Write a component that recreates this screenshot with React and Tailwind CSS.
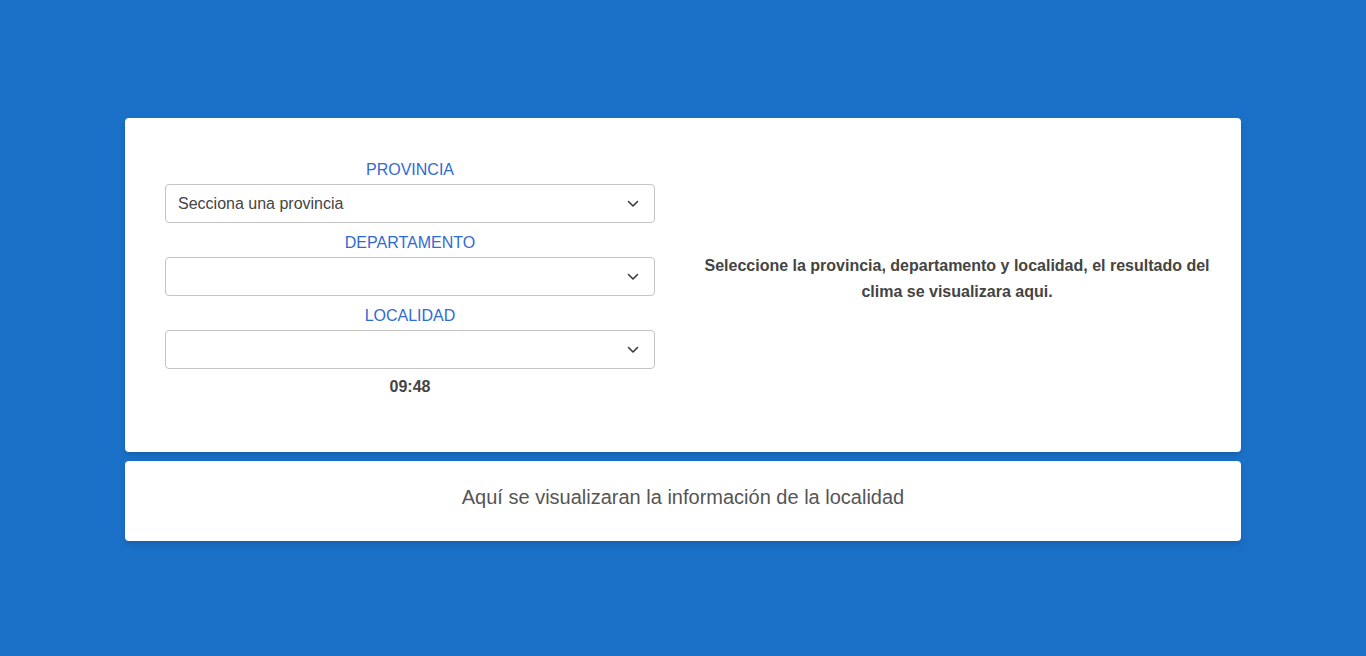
import React, { useState } from "react";

const Chevron = () => (
  <svg
    className="pointer-events-none absolute right-[16px] top-1/2 -translate-y-1/2"
    width="12"
    height="8"
    viewBox="0 0 12 8"
    fill="none"
  >
    <path d="M1.5 1.5 6 6l4.5-4.5" stroke="#343a40" strokeWidth="1.6" strokeLinecap="round" strokeLinejoin="round" />
  </svg>
);

const Field = ({ label, value, onChange, options, first }) => (
  <div className={first ? "" : "mt-2"}>
    <label className="block h-6 leading-6 text-center text-[16px] text-[#2f6bd4] mb-0.5">{label}</label>
    <div className="relative">
      <select
        value={value}
        onChange={(e) => onChange(e.target.value)}
        className="w-full h-[39px] appearance-none rounded-[4px] border border-[#c4c4c4] bg-white pl-[12px] pr-10 text-[16px] text-[#444] outline-none"
      >
        {options.map((o) => (
          <option key={o} value={o}>
            {o}
          </option>
        ))}
      </select>
      <Chevron />
    </div>
  </div>
);

export default function App() {
  const [provincia, setProvincia] = useState("Secciona una provincia");
  const [departamento, setDepartamento] = useState("");
  const [localidad, setLocalidad] = useState("");

  return (
    <div
      className="min-h-screen bg-[#1a6fc6] flex flex-col items-center justify-center pt-[3px]"
      style={{ fontFamily: "'Liberation Sans', Arial, sans-serif" }}
    >
      <div className="w-[1116px]">
        <div className="bg-white rounded-[4px] shadow-md flex items-center pt-[40px] pb-[53px] pl-[40px]">
          <div className="w-[490px]">
            <Field
              first
              label="PROVINCIA"
              value={provincia}
              onChange={setProvincia}
              options={["Secciona una provincia"]}
            />
            <Field label="DEPARTAMENTO" value={departamento} onChange={setDepartamento} options={[""]} />
            <Field label="LOCALIDAD" value={localidad} onChange={setLocalidad} options={[""]} />
            <p className="mt-1.5 text-center text-[16px] leading-6 font-bold text-[#444]">09:48</p>
          </div>
          <div className="flex-1 pl-[40px] pr-[22px]">
            <p className="text-center text-[16px] leading-[26px] font-bold text-[#444]">
              Seleccione la provincia, departamento y localidad, el resultado del
              <br />
              clima se visualizara aqui.
            </p>
          </div>
        </div>
        <div className="mt-[9px] bg-white rounded-[4px] shadow-md h-[80px] flex items-center justify-center pb-2">
          <p className="text-[20px] text-[#555]">Aquí se visualizaran la información de la localidad</p>
        </div>
      </div>
    </div>
  );
}
